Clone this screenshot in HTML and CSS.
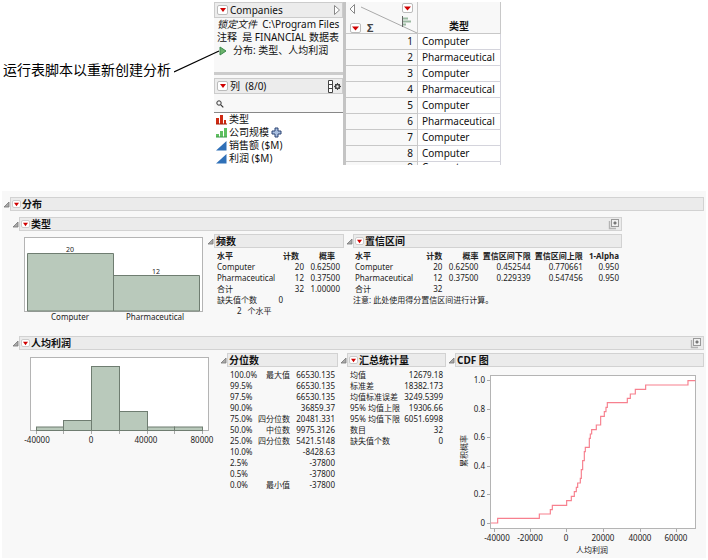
FILE: index.html
```
<!DOCTYPE html>
<html lang="zh-CN">
<head>
  <title>分布</title>
  <meta charset="UTF-8">
  <meta name="viewport" content="width=device-width, initial-scale=1.0">
  <link rel="stylesheet" href="styles.css">
</head>
<body>
  <svg class="symbols" aria-hidden="true">
    <symbol id="fold" viewBox="0 0 7 7"><path d="M6 1V6H1Z" fill="#aaa" stroke="#777" stroke-width=".8"/></symbol>
    <symbol id="red" viewBox="0 0 8 6"><path d="M1 1H7L4 5Z" fill="#d00000"/></symbol>
    <symbol id="copy" viewBox="0 0 12 12">
      <path d="M1.500 3V10.500H8" fill="none" stroke="#b4b4b4" stroke-width="1.400"/>
      <rect x="3.500" y="1.500" width="7" height="7" fill="#f0f0f0" stroke="#999"/>
      <path d="M7 3V7M5 5H9" stroke="#888"/>
      <rect x="6" y="4" width="2" height="2" fill="#777"/>
    </symbol>
  </svg>

  <div class="top">
    <p class="callout">运行表脚本以重新创建分析</p>
    <svg class="pointer" width="46" height="24"><path d="M0 22L45 1" stroke="#000" stroke-width="1.2"/></svg>

    <div class="window">
      <div class="side">
        <div class="side-head">
          <button class="menu" aria-label="菜单"><svg><use href="#red"/></svg></button>
          <span>Companies</span>
          <svg class="right" width="8" height="12"><path d="M1.5 1.5V10.5L6.5 6Z" fill="#fff" stroke="#888"/></svg>
        </div>
        <div class="scripts">
          <p><i>锁定文件</i>&nbsp; C:\Program Files</p>
          <p>注释&nbsp; 是 FINANCIAL 数据表</p>
          <p class="script"><svg width="8" height="10"><path d="M1 1V9L7 5Z" fill="#6cb36c" stroke="#3c8a4c"/></svg>分布: 类型、人均利润</p>
        </div>
        <div class="side-head columns-head">
          <button class="menu" aria-label="菜单"><svg><use href="#red"/></svg></button>
          <span>列&nbsp; (8/0)</span>
          <svg class="right" width="14" height="13">
            <path d="M1.5 .5H5.5V12.5H1.5ZM1.5 4.5H5.5M1.5 8.5H5.5" fill="#fff" stroke="#444"/>
            <circle cx="10.5" cy="6.5" r="2" fill="none" stroke="#444" stroke-width="1.6"/>
            <path d="M10.5 3V4.500M10.500 8.500V10M7 6.500H8.500M12.500 6.500H14M8 4L9 5M12 8L13 9M13 4L12 5M9 8L8 9" stroke="#444"/>
          </svg>
        </div>
        <div class="search">
          <svg width="8" height="8"><circle cx="3" cy="3" r="2.2" fill="none" stroke="#333"/><path d="M4.600 4.600L7.300 7.300" stroke="#333" stroke-width="1.200"/></svg>
        </div>
        <ul class="columns">
          <li><svg width="11" height="11"><path d="M0 4H3V10H0ZM4 1H7V10H4ZM8 6H10V10H8Z" fill="#cf2a12"/><path d="M0 10H11" stroke="#a01c08"/></svg>类型</li>
          <li><svg width="11" height="11"><path d="M0 7H3V10H0ZM4 4H7V10H4ZM8 1H11V10H8Z" fill="#5fbf60"/><path d="M0 10H11" stroke="#3c9a48"/></svg>公司规模<svg width="11" height="11"><path d="M4 1H7V4H10V7H7V10H4V7H1V4H4Z" fill="#a9bfe0" stroke="#2b4272"/></svg></li>
          <li><svg width="11" height="11"><path d="M10.500 1V10.500H0Z" fill="#2f70b8"/></svg>销售额 ($M)</li>
          <li><svg width="11" height="11"><path d="M10.500 1V10.500H0Z" fill="#2f70b8"/></svg>利润 ($M)</li>
        </ul>
      </div>

      <table class="data">
        <thead>
          <tr>
            <th class="corner">
              <svg width="71" height="31">
                <path d="M8.500 2.500V11.500L4 7Z" fill="#fff" stroke="#888"/>
                <path d="M15 5L71 31" stroke="#aaa"/>
                <path d="M56.500 14V25" stroke="#666"/>
                <path d="M57 16.500H62M57 19.500H65M57 22.500H60" stroke="#9ab8a0" stroke-width="2"/>
                <rect x="4.500" y="21.500" width="10" height="9" rx="1.500" fill="#fff" stroke="#bbb"/>
                <path d="M6 24.500H13L9.500 28.500Z" fill="#d00000"/>
                <rect x="56.500" y="1.500" width="10" height="9" rx="1.500" fill="#fff" stroke="#bbb"/>
                <path d="M58 4.500H65L61.500 8.500Z" fill="#d00000"/>
                <text class="sigma" x="21" y="30">Σ</text>
              </svg>
            </th>
            <th class="name">类型</th>
          </tr>
        </thead>
        <tbody>
          <tr><th>1</th><td>Computer</td></tr>
          <tr><th>2</th><td>Pharmaceutical</td></tr>
          <tr><th>3</th><td>Computer</td></tr>
          <tr><th>4</th><td>Pharmaceutical</td></tr>
          <tr><th>5</th><td>Computer</td></tr>
          <tr><th>6</th><td>Pharmaceutical</td></tr>
          <tr><th>7</th><td>Computer</td></tr>
          <tr><th>8</th><td>Computer</td></tr>
          <tr class="last"><th>9</th><td>Computer</td></tr>
        </tbody>
      </table>
    </div>
  </div>

  <div class="report">
    <div class="head main-head">
      <button class="fold" aria-label="折叠"><svg><use href="#fold"/></svg></button>
      <h1 class="bar"><button class="menu small" aria-label="菜单"><svg><use href="#red"/></svg></button>分布</h1>
    </div>

    <div class="section fit">
      <div class="head">
        <button class="fold" aria-label="折叠"><svg><use href="#fold"/></svg></button>
        <h2 class="bar"><button class="menu small" aria-label="菜单"><svg><use href="#red"/></svg></button>类型<svg class="copy"><use href="#copy"/></svg></h2>
      </div>
      <div class="body">
        <svg class="chart type-chart" width="179" height="86">
          <rect x=".5" y="1.500" width="178" height="74" fill="#fff" stroke="#b4b4b4"/>
          <path d="M3.500 75V17.500H89.500V75ZM89.500 75V39.500H175.500V75Z" fill="#b9c9bb" stroke="#6f7d71"/>
          <text class="count" x="46" y="16">20</text>
          <text class="count" x="132" y="38">12</text>
          <text x="46" y="84">Computer</text>
          <text x="131" y="84">Pharmaceutical</text>
        </svg>
        <div class="block freq">
          <div class="head">
            <button class="fold" aria-label="折叠"><svg><use href="#fold"/></svg></button>
            <h3 class="bar">频数</h3>
          </div>
          <table class="stats">
            <colgroup><col class="c-level"><col class="c-count"><col class="c-prob"></colgroup>
            <tr><th>水平</th><th>计数</th><th>概率</th></tr>
            <tr><td>Computer</td><td>20</td><td>0.62500</td></tr>
            <tr><td>Pharmaceutical</td><td>12</td><td>0.37500</td></tr>
            <tr><td>合计</td><td>32</td><td>1.00000</td></tr>
          </table>
          <p class="missing"><span>缺失值个数</span><span>0</span></p>
          <p class="levels"><span>2</span><span>个水平</span></p>
        </div>
        <div class="block interval">
          <div class="head">
            <button class="fold" aria-label="折叠"><svg><use href="#fold"/></svg></button>
            <h3 class="bar"><button class="menu small" aria-label="菜单"><svg><use href="#red"/></svg></button>置信区间</h3>
          </div>
          <table class="stats">
            <colgroup><col class="c-level"><col class="c-count"><col class="c-prob"><col class="c-limit"><col class="c-limit"><col class="c-prob"></colgroup>
            <tr><th>水平</th><th>计数</th><th>概率</th><th>置信区间下限</th><th>置信区间上限</th><th>1-Alpha</th></tr>
            <tr><td>Computer</td><td>20</td><td>0.62500</td><td>0.452544</td><td>0.770661</td><td>0.950</td></tr>
            <tr><td>Pharmaceutical</td><td>12</td><td>0.37500</td><td>0.229339</td><td>0.547456</td><td>0.950</td></tr>
            <tr><td>合计</td><td>32</td><td></td><td></td><td></td><td></td></tr>
          </table>
          <p class="note">注意: 此处使用得分置信区间进行计算。</p>
        </div>
      </div>
    </div>

    <div class="section">
      <div class="head">
        <button class="fold" aria-label="折叠"><svg><use href="#fold"/></svg></button>
        <h2 class="bar"><button class="menu small" aria-label="菜单"><svg><use href="#red"/></svg></button>人均利润<svg class="copy"><use href="#copy"/></svg></h2>
      </div>
      <div class="body">
        <svg class="chart profit-chart" width="190" height="90">
          <rect x="6.500" y="1.500" width="178" height="73" fill="#fff" stroke="#b4b4b4"/>
          <g fill="#b9c9bb" stroke="#6f7d71">
            <rect x="12.500" y="71" width="27" height="3.500"/>
            <rect x="39.500" y="64.500" width="28" height="10"/>
            <rect x="67.500" y="10.500" width="28" height="64"/>
            <rect x="95.500" y="55.500" width="28" height="19"/>
            <rect x="123.500" y="71" width="27" height="3.500"/>
            <rect x="150.500" y="71" width="28" height="3.500"/>
          </g>
          <path d="M12.500 75V78M39.500 75V78M67.500 75V78M95.500 75V78M123.500 75V78M150.500 75V78M178.500 75V78" stroke="#aaa"/>
          <text x="13" y="87">-40000</text>
          <text x="67" y="87">0</text>
          <text x="122" y="87">40000</text>
          <text x="178" y="87">80000</text>
        </svg>
        <div class="block quantiles">
          <div class="head">
            <button class="fold" aria-label="折叠"><svg><use href="#fold"/></svg></button>
            <h3 class="bar">分位数</h3>
          </div>
          <table class="stats">
            <tr><td>100.0%</td><td>最大值</td><td>66530.135</td></tr>
            <tr><td>99.5%</td><td></td><td>66530.135</td></tr>
            <tr><td>97.5%</td><td></td><td>66530.135</td></tr>
            <tr><td>90.0%</td><td></td><td>36859.37</td></tr>
            <tr><td>75.0%</td><td>四分位数</td><td>20481.331</td></tr>
            <tr><td>50.0%</td><td>中位数</td><td>9975.3126</td></tr>
            <tr><td>25.0%</td><td>四分位数</td><td>5421.5148</td></tr>
            <tr><td>10.0%</td><td></td><td>-8428.63</td></tr>
            <tr><td>2.5%</td><td></td><td>-37800</td></tr>
            <tr><td>0.5%</td><td></td><td>-37800</td></tr>
            <tr><td>0.0%</td><td>最小值</td><td>-37800</td></tr>
          </table>
        </div>
        <div class="block summary">
          <div class="head">
            <button class="fold" aria-label="折叠"><svg><use href="#fold"/></svg></button>
            <h3 class="bar"><button class="menu small" aria-label="菜单"><svg><use href="#red"/></svg></button>汇总统计量</h3>
          </div>
          <table class="stats">
            <tr><td>均值</td><td>12679.18</td></tr>
            <tr><td>标准差</td><td>18382.173</td></tr>
            <tr><td>均值标准误差</td><td>3249.5399</td></tr>
            <tr><td>95% 均值上限</td><td>19306.66</td></tr>
            <tr><td>95% 均值下限</td><td>6051.6998</td></tr>
            <tr><td>数目</td><td>32</td></tr>
            <tr><td>缺失值个数</td><td>0</td></tr>
          </table>
        </div>
        <div class="block cdf">
          <div class="head">
            <button class="fold" aria-label="折叠"><svg><use href="#fold"/></svg></button>
            <h3 class="bar">CDF 图</h3>
          </div>
          <svg class="chart cdf-chart" width="246" height="185">
            <rect x="32.500" y="4.500" width="205" height="153" fill="#fff" stroke="#b4b4b4"/>
            <path d="M29 9.500H32M29 38.500H32M29 66.500H32M29 95.500H32M29 123.500H32M29 152.500H32" stroke="#aaa"/>
            <path d="M36.500 158V161M72.500 158V161M108.500 158V161M145.500 158V161M182.500 158V161M218.500 158V161" stroke="#aaa"/>
            <g transform="translate(-18 -36) scale(.3333)">
              <path d="M153 564H173V550H298V537H331V524H337V511H380V497H394V484H403V470H409V457H413V444H421V430H424V404H428V377H433V350H436V337H448V310H451V297H455V284H469V270H482V244H493V230H498V217H502V203H562V190H571V177H586V163H617V150H744V137H766" fill="none" stroke="#f7808e" stroke-width="3.500"/>
            </g>
            <g class="y-axis">
              <text x="27" y="12">1.0</text>
              <text x="27" y="41">0.8</text>
              <text x="27" y="69">0.6</text>
              <text x="27" y="98">0.4</text>
              <text x="27" y="126">0.2</text>
              <text x="27" y="155">0</text>
            </g>
            <text x="39" y="170">-40000</text>
            <text x="72" y="170">-20000</text>
            <text x="108" y="170">0</text>
            <text x="145" y="170">20000</text>
            <text x="182" y="170">40000</text>
            <text x="218" y="170">60000</text>
            <text x="134" y="182">人均利润</text>
            <text x="9" y="80" transform="rotate(-90 9 80)">累积概率</text>
          </svg>
        </div>
      </div>
    </div>
  </div>
</body>
</html>
```

FILE: styles.css
```
* {
  box-sizing: border-box;
}

body {
  margin: 0;
  background-color: #fff;
  color: #222;
  font-family: "Noto Sans", "Noto Sans CJK SC", sans-serif;
  font-size: 8px;
  line-height: 11px;
}

p, h1, h2, h3, ul {
  margin: 0;
  padding: 0;
}

svg {
  display: block;
  flex: none;
}

button {
  padding: 0;
  border: none;
  background: none;
  cursor: pointer;
  flex: none;
}

.symbols {
  position: absolute;
  width: 0;
  height: 0;
}

.menu {
  display: flex;
  align-items: center;
  justify-content: center;
  width: 11px;
  height: 10px;
  border: 1px solid #bbb;
  border-radius: 2px;
  background-color: #fff;
}

.menu svg {
  width: 8px;
  height: 6px;
}

.menu.small {
  width: 9px;
  height: 8px;
  border-color: #ccc;
  margin-right: 1px;
}

.menu.small svg {
  width: 7px;
  height: 5px;
}

/* data table window */
.top {
  display: flex;
  padding: 2px 0 0 3px;
}

.callout {
  padding-top: 58px;
  font-size: 14px;
  line-height: 20px;
  color: #000;
  white-space: nowrap;
}

.pointer {
  margin: 48px -6px 0 3px;
  z-index: 1;
}

.window {
  display: flex;
  height: 163px;
  overflow: hidden;
  font-size: 10px;
  line-height: 13px;
  color: #111;
}

.side {
  width: 132px;
  border-right: 3px solid #c4c4c4;
  background-color: #f8f8f8;
}

.side-head {
  display: flex;
  align-items: center;
  gap: 2px;
  height: 16px;
  padding: 0 1px 0 2px;
  border: 1px solid #ccc;
  background-color: #ececec;
}

.side-head .right {
  margin-left: auto;
}

.scripts {
  height: 57px;
  padding: 0 0 0 3px;
  border-bottom: 3px solid #ccc;
  overflow: hidden;
  white-space: nowrap;
}

.script {
  display: flex;
  align-items: center;
  gap: 6px;
  padding-left: 2px;
}

.columns-head {
  margin-top: 3px;
}

.search {
  height: 19px;
  padding: 6px 2px;
  border-bottom: 1px solid #888;
}

.columns {
  background-color: #fff;
  list-style: none;
}

.columns li {
  display: flex;
  align-items: center;
  gap: 2px;
  height: 13px;
  padding-left: 2px;
  white-space: nowrap;
}

.data {
  border-collapse: collapse;
  height: 175px;
}

.data th,
.data td {
  height: 16px;
  padding: 0 4px;
  border-bottom: 1px solid #d4d4dc;
  border-right: 1px solid #d4d4dc;
  text-align: left;
  background-color: #fff;
}

.data th {
  background-color: #f8f8f8;
  font-weight: normal;
  text-align: right;
  border-color: #c8c8c8;
}

.data .last th,
.data .last td {
  line-height: 10px;
  vertical-align: top;
}

.data .corner {
  width: 71px;
  height: 31px;
  padding: 0;
}

.data .corner svg {
  overflow: visible;
}

.data .name {
  width: 83px;
  font-weight: bold;
  text-align: center;
  vertical-align: bottom;
}

.sigma {
  font-size: 11px;
  font-weight: bold;
  fill: #444;
}

/* report */
.report {
  margin: 26px 2px 0;
  padding: 6px 0 2px 1px;
  background-color: #f8f8f8;
}

.head {
  display: flex;
  align-items: center;
}

.fold {
  width: 7px;
  height: 7px;
}

.fold svg {
  width: 7px;
  height: 7px;
}

.bar {
  display: flex;
  flex: 1;
  align-items: center;
  height: 14px;
  padding: 0 1px;
  border: 1px solid #d2d2d2;
  background-color: #ebebeb;
  font-size: 10px;
  line-height: 12px;
  font-weight: bold;
  color: #111;
  white-space: nowrap;
}

.copy {
  width: 12px;
  height: 12px;
  margin-left: auto;
}

.main-head {
  margin: 0 2px 6px 0;
}

.section {
  margin: 0 2px 0 9px;
}

.section.fit {
  width: fit-content;
  margin-bottom: 14px;
}

.body {
  display: flex;
  align-items: flex-start;
  gap: 2px;
  padding: 3px 0 0 12px;
}

.chart text {
  font-size: 8px;
  fill: #222;
  text-anchor: middle;
}

.chart .count {
  font-size: 7px;
}

.chart .y-axis text {
  text-anchor: end;
}

.type-chart {
  margin: 2px 2px 0 0;
}

.profit-chart {
  margin: 3px 4px 0 0;
}

.cdf-chart {
  margin: 4px 0 0 10px;
}

.freq {
  width: 137px;
}

.interval {
  width: 276px;
}

.quantiles {
  width: 118px;
}

.summary {
  width: 106px;
}

.cdf {
  flex: 1;
}

.stats {
  width: calc(100% - 13px);
  margin: 2px 3px 0 10px;
  border-collapse: collapse;
  white-space: nowrap;
}

.freq .stats,
.interval .stats {
  table-layout: fixed;
}

.freq .stats {
  width: calc(100% - 14px);
}

.interval .stats {
  width: calc(100% - 12px);
  margin-left: 9px;
}

.stats th,
.stats td {
  height: 11px;
  padding: 0;
  text-align: right;
}

.stats th:first-child,
.stats td:first-child {
  text-align: left;
}

.freq .stats th:not(:first-child) {
  padding-right: 5px;
}

.quantiles .stats td:nth-child(2) {
  width: 28px;
}

.quantiles .stats td:nth-child(3) {
  width: 45px;
}

.c-level {
  width: 58px;
}

.c-count {
  width: 29px;
}

.c-prob {
  width: 36px;
}

.c-limit {
  width: 52px;
}

.missing {
  display: flex;
  justify-content: space-between;
  width: 66px;
  margin-left: 10px;
}

.levels {
  display: flex;
  gap: 6px;
  margin-left: 30px;
}

.note {
  margin-left: 7px;
}
```
